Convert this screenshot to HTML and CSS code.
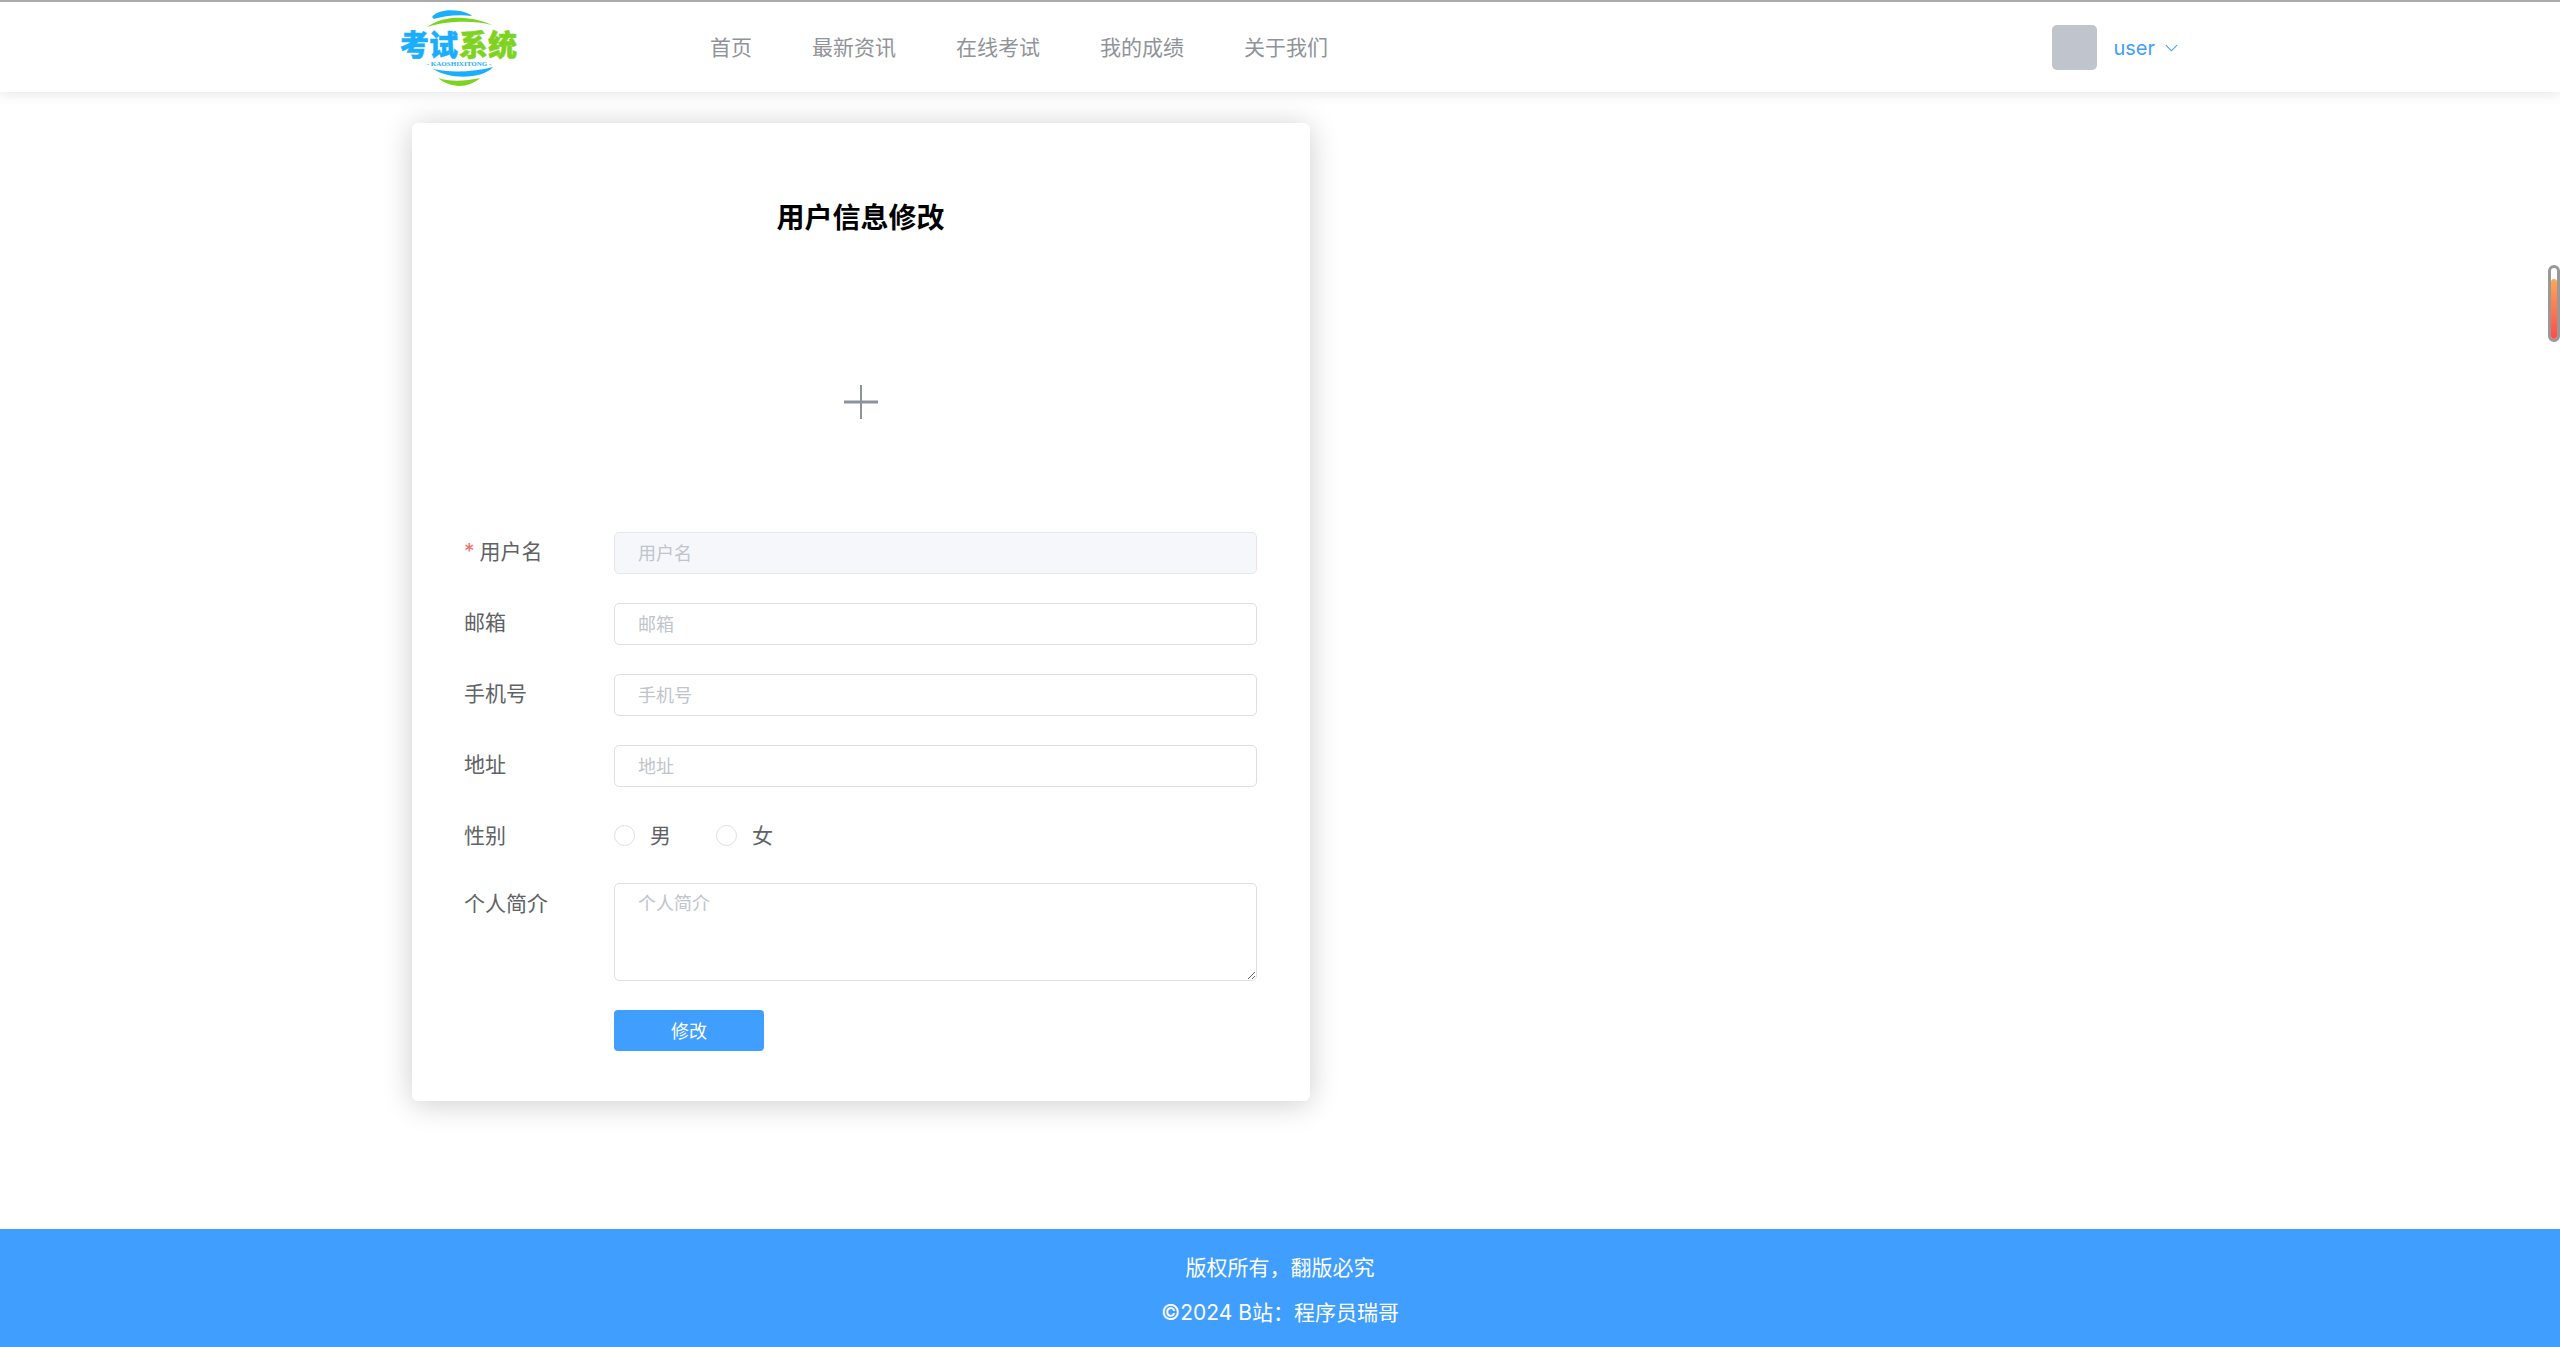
FILE: index.html
```html
<!DOCTYPE html>
<html lang="zh-CN">
<head>
<meta charset="utf-8">
<title>用户信息修改</title>
<link rel="stylesheet" href="styles.css">
</head>
<body>
<header class="topbar">
  <div class="topbar-inner">
    <svg class="logo" viewBox="0 0 118 78" width="118" height="78">
      <path d="M32 7C36 1 48-1 60 1C66 2 70 4 72 6C58 4 44 6 34 9Z" fill="#1aaeff"/>
      <path d="M27 17C38 9 52 7 64 8C76 9 86 12 92 15C72 10 46 11 27 17Z" fill="#7ed321"/>
      <text class="logo-cn logo-blue" x="0" y="46">考试</text>
      <text class="logo-cn logo-green" x="59" y="46">系统</text>
      <text class="logo-en" x="59" y="56" text-anchor="middle" fill="#1aaeff">- KAOSHIXITONG -</text>
      <path d="M33 59C50 63 74 62 93 57C84 68 52 71 33 59Z" fill="#1aaeff"/>
      <path d="M38 68C50 72 66 71 80 68C68 79 50 78 38 68Z" fill="#7ed321"/>
    </svg>
    <nav class="nav">
      <a class="nav-link">首页</a>
      <a class="nav-link">最新资讯</a>
      <a class="nav-link">在线考试</a>
      <a class="nav-link">我的成绩</a>
      <a class="nav-link">关于我们</a>
    </nav>
    <div class="user">
      <span class="avatar"></span>
      <span class="user-name">user</span>
      <svg class="caret" viewBox="0 0 14 8" width="13" height="8"><path d="M1 1L7 7L13 1" fill="none" stroke="#409eff" stroke-width="1.2"/></svg>
    </div>
  </div>
</header>

<main class="main">
  <section class="card">
    <h1 class="title">用户信息修改</h1>
    <div class="uploader">
      <svg viewBox="0 0 34 34" width="34" height="34"><path d="M17 0V34" stroke="#8c939d" stroke-width="2" fill="none"/><path d="M0 17H34" stroke="#8c939d" stroke-width="3" fill="none"/></svg>
    </div>
    <form class="form">
      <div class="row">
        <label class="label"><span class="req">*</span>用户名</label>
        <input class="input input-disabled" placeholder="用户名" disabled>
      </div>
      <div class="row">
        <label class="label">邮箱</label>
        <input class="input" placeholder="邮箱">
      </div>
      <div class="row">
        <label class="label">手机号</label>
        <input class="input" placeholder="手机号">
      </div>
      <div class="row">
        <label class="label">地址</label>
        <input class="input" placeholder="地址">
      </div>
      <div class="row row-radio">
        <label class="label">性别</label>
        <div class="radios">
          <span class="radio"><i class="radio-dot"></i>男</span>
          <span class="radio"><i class="radio-dot"></i>女</span>
        </div>
      </div>
      <div class="row">
        <label class="label label-tall">个人简介</label>
        <textarea class="textarea" placeholder="个人简介"></textarea>
      </div>
      <div class="row row-last">
        <span class="label"></span>
        <button class="button" type="button">修改</button>
      </div>
    </form>
  </section>
</main>

<footer class="footer">
  <p class="footer-line">版权所有，翻版必究</p>
  <p class="footer-line">©2024 B站：程序员瑞哥</p>
</footer>

<div class="side-widget"><span class="side-fill"></span></div>
</body>
</html>
```
FILE: styles.css
```css
* { box-sizing: border-box; }
html, body { margin: 0; padding: 0; }
body {
  height: 1347px;
  overflow: hidden;
  background: #fff;
  font-family: Inter, "Noto Sans CJK SC", sans-serif;
  color: #606266;
}
.topbar {
  height: 92px;
  border-top: 2px solid #a9a9ae;
  background: #fff;
  box-shadow: 0 2px 12px rgba(0, 0, 0, .1);
  position: relative;
}
.topbar-inner {
  width: 1800px;
  height: 90px;
  margin: 0 auto;
  padding: 0 0 0 20px;
  display: flex;
  align-items: center;
}
.logo { flex: none; margin-top: 4px; }
.logo-cn { font: 900 29px "Noto Sans CJK SC", sans-serif; stroke-width: .5px; }
.logo-blue { fill: #1aaeff; stroke: #1aaeff; }
.logo-green { fill: #7ed321; stroke: #7ed321; }
.logo-en { font: 700 7px "Liberation Serif", serif; }
.nav { display: flex; gap: 60px; margin-left: 192px; padding-top: 1px; }
.nav-link { font-size: 21px; color: #909399; line-height: 30px; }
.user { margin-left: auto; display: flex; align-items: center; padding-right: 2px; }
.avatar { width: 45px; height: 45px; border-radius: 5px; background: #c0c4cc; }
.user-name { margin-left: 16px; font-size: 20px; color: #409eff; line-height: 30px; padding-top: 1px; }
.caret { margin-left: 10px; margin-top: 2px; }

.main { padding: 31px 0 128px; width: 1800px; margin: 0 auto; }
.card {
  width: 898px;
  height: 978px;
  margin-left: 32px;
  padding: 0 53px 0 52px;
  background: #fff;
  border-radius: 6px;
  box-shadow: 0 3px 30px rgba(0, 0, 0, .2);
}
.title {
  margin: 0;
  padding-top: 75px;
  text-align: center;
  font-size: 28px;
  line-height: 40px;
  font-weight: 700;
  color: #000;
}
.uploader {
  height: 178px;
  margin-top: 75px;
  display: flex;
  align-items: center;
  justify-content: center;
}
.form { margin-top: 41px; }
.row { display: flex; align-items: flex-start; margin-bottom: 29px; }
.row-last { margin-bottom: 0; }
.label { width: 150px; flex: none; font-size: 21px; line-height: 40px; color: #606266; }
.label-tall { line-height: 42px; }
.req { color: #f56c6c; margin-right: 5px; font-size: 21px; }
.input, .textarea {
  width: 643px;
  border: 1.5px solid #dcdfe6;
  border-radius: 5px;
  background: #fff;
  font-family: inherit;
  font-size: 18px;
  color: #606266;
  padding: 0 23px;
  outline: none;
}
.input { height: 42px; }
.input-disabled { background: #f5f7fa; border-color: #e4e7ed; }
.textarea { height: 98px; display: block; padding-top: 7px; line-height: 26px; resize: vertical; }
.input::placeholder, .textarea::placeholder { color: #c0c4cc; opacity: 1; }
.row-radio { height: 38px; align-items: center; }
.row-radio .label { line-height: 38px; padding-top: 1px; }
.radios { display: flex; gap: 45px; padding-top: 1px; }
.radio { display: inline-flex; align-items: center; font-size: 21px; line-height: 38px; color: #606266; }
.radio-dot {
  width: 21px;
  height: 21px;
  margin-right: 15px;
  border: 1.5px solid #dcdfe6;
  border-radius: 50%;
  background: #fff;
}
.button {
  width: 150px;
  height: 41px;
  padding: 0 0 2px;
  border: 0;
  border-radius: 4px;
  background: #409eff;
  color: #fff;
  font-family: inherit;
  font-size: 18px;
}
.footer {
  height: 118px;
  padding-top: 16px;
  background: #409eff;
  color: #fff;
  text-align: center;
  font-size: 21px;
}
.footer-line { margin: 0; line-height: 45px; }
.side-widget {
  position: fixed;
  right: 0;
  top: 265px;
  width: 12px;
  height: 77px;
  border: 3px solid #999;
  border-radius: 6px;
  background: #fff;
}
.side-fill {
  position: absolute;
  left: 0;
  right: 0;
  top: 11px;
  bottom: 0;
  border-radius: 3px;
  background: linear-gradient(#ffa654, #ff4b4b);
}
```
